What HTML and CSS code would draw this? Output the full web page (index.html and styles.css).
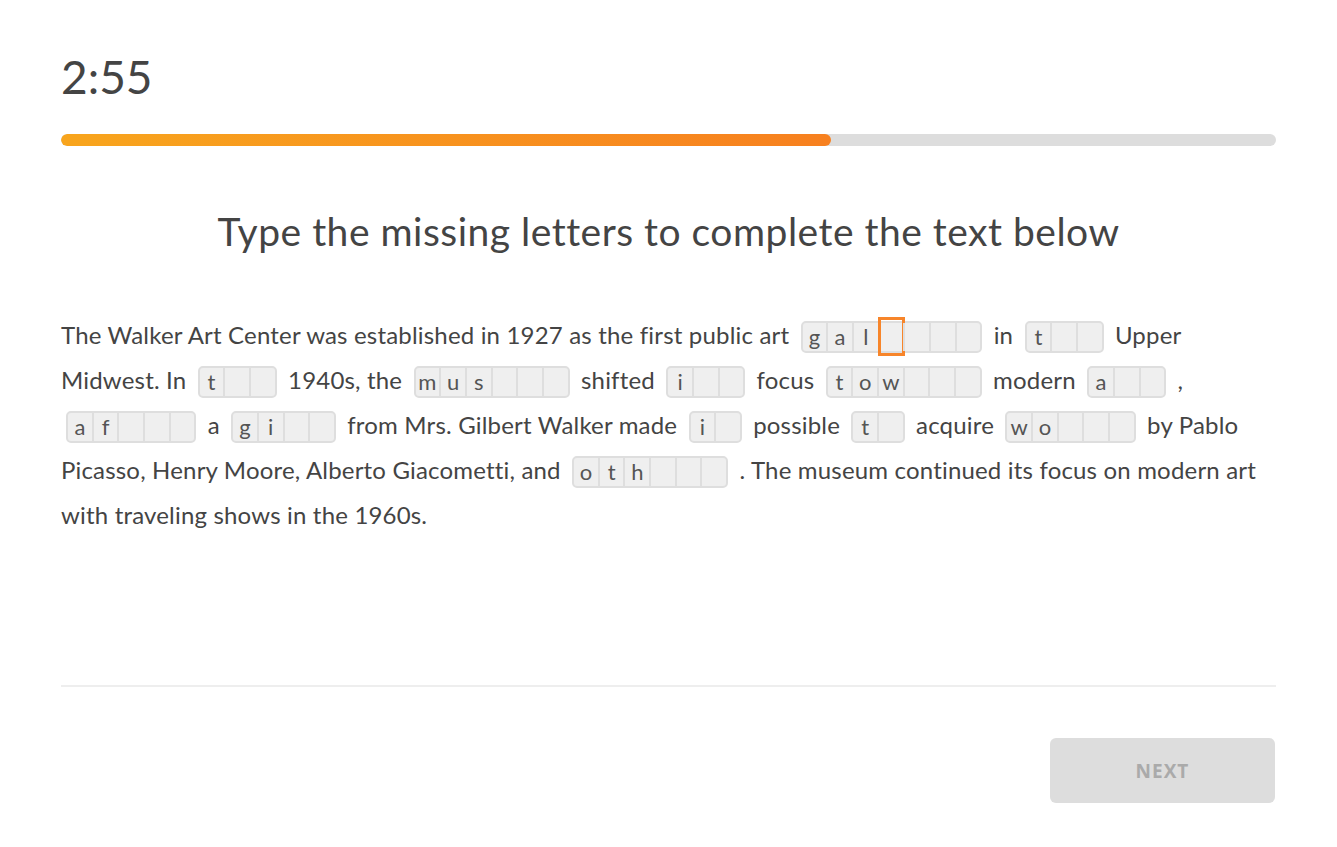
FILE: index.html
```html
<!DOCTYPE html>
<html lang="en">
<head>
    <meta charset="UTF-8">
    <meta name="viewport" content="width=device-width, initial-scale=1.0">
    <title>Fill in the Blanks</title>
    <link rel="stylesheet" href="styles.css">
</head>
<body>

<div class="page">
    <div class="timer">2:55</div>
    <div class="progress">
        <div class="progress-fill" style="width: 63.4%"></div>
    </div>

    <h1>Type the missing letters to complete the text below</h1>

    <div class="passage">
        The Walker Art Center was established in 1927 as the first public art
        <span class="word"><span class="cell">g</span><span class="cell">a</span><span class="cell">l</span><span class="cell active"></span><span class="cell"></span><span class="cell"></span><span class="cell"></span></span>
        in
        <span class="word"><span class="cell">t</span><span class="cell"></span><span class="cell"></span></span>
        Upper Midwest. In
        <span class="word"><span class="cell">t</span><span class="cell"></span><span class="cell"></span></span>
        1940s, the
        <span class="word"><span class="cell">m</span><span class="cell">u</span><span class="cell">s</span><span class="cell"></span><span class="cell"></span><span class="cell"></span></span>
        shifted
        <span class="word"><span class="cell">i</span><span class="cell"></span><span class="cell"></span></span>
        focus
        <span class="word"><span class="cell">t</span><span class="cell">o</span><span class="cell">w</span><span class="cell"></span><span class="cell"></span><span class="cell"></span></span>
        modern
        <span class="word"><span class="cell">a</span><span class="cell"></span><span class="cell"></span></span>
        ,
        <span class="word"><span class="cell">a</span><span class="cell">f</span><span class="cell"></span><span class="cell"></span><span class="cell"></span></span>
        a
        <span class="word"><span class="cell">g</span><span class="cell">i</span><span class="cell"></span><span class="cell"></span></span>
        from Mrs. Gilbert Walker made
        <span class="word"><span class="cell">i</span><span class="cell"></span></span>
        possible
        <span class="word"><span class="cell">t</span><span class="cell"></span></span>
        acquire
        <span class="word"><span class="cell">w</span><span class="cell">o</span><span class="cell"></span><span class="cell"></span><span class="cell"></span></span>
        by Pablo Picasso, Henry Moore, Alberto Giacometti, and
        <span class="word"><span class="cell">o</span><span class="cell">t</span><span class="cell">h</span><span class="cell"></span><span class="cell"></span><span class="cell"></span></span>
        . The museum continued its focus on modern art with traveling shows in the 1960s.
    </div>

    <div class="footer">
        <button class="next" disabled>NEXT</button>
    </div>
</div>

</body>
</html>
```

FILE: styles.css
```css
body {
    font-family: Lato, "Open Sans", sans-serif;
    background-color: #fff;
    color: #444;
    margin: 0;
}
.page {
    padding: 49px 61px 0 61px;
}
.timer {
    font-size: 46px;
    line-height: 56px;
    color: #444;
}
.progress {
    margin-top: 29px;
    height: 12px;
    border-radius: 6px;
    background: #dddddd;
    overflow: hidden;
}
.progress-fill {
    height: 100%;
    border-radius: 6px;
    background: linear-gradient(to right, #f8a51d, #f7801f);
}
h1 {
    margin: 63px 0 0 0;
    font-size: 39px;
    line-height: 44px;
    letter-spacing: 0.5px;
    font-weight: normal;
    text-align: center;
    color: #444;
}
.passage {
    margin-top: 59px;
    min-height: 373px;
    font-size: 24px;
    line-height: 45px;
    letter-spacing: 0.18px;
    color: #444;
}
.word {
    display: inline-flex;
    vertical-align: middle;
    margin: 0 5px;
    position: relative;
    top: -1px;
    background: #efefef;
    border: 2px solid #dedede;
    border-radius: 5px;
    letter-spacing: 0;
}
.cell {
    position: relative;
    width: 23.7px;
    height: 28px;
    line-height: 28px;
    text-align: center;
    font-size: 22px;
    color: #555;
}
.cell + .cell {
    border-left: 2px solid #dedede;
}
.cell.active::after {
    content: "";
    position: absolute;
    top: -6px;
    bottom: -5px;
    left: -2px;
    right: -2px;
    border: 3px solid #f7852a;
}
.footer {
    border-top: 2px solid #eeeeee;
    padding-top: 51px;
    display: flex;
    justify-content: flex-end;
}
.next {
    width: 225px;
    height: 65px;
    margin-right: 1px;
    border: none;
    border-radius: 6px;
    background: #dddddd;
    color: #aaaaaa;
    font-family: "Open Sans", sans-serif;
    font-weight: bold;
    font-size: 19px;
    letter-spacing: 1px;
}
```
